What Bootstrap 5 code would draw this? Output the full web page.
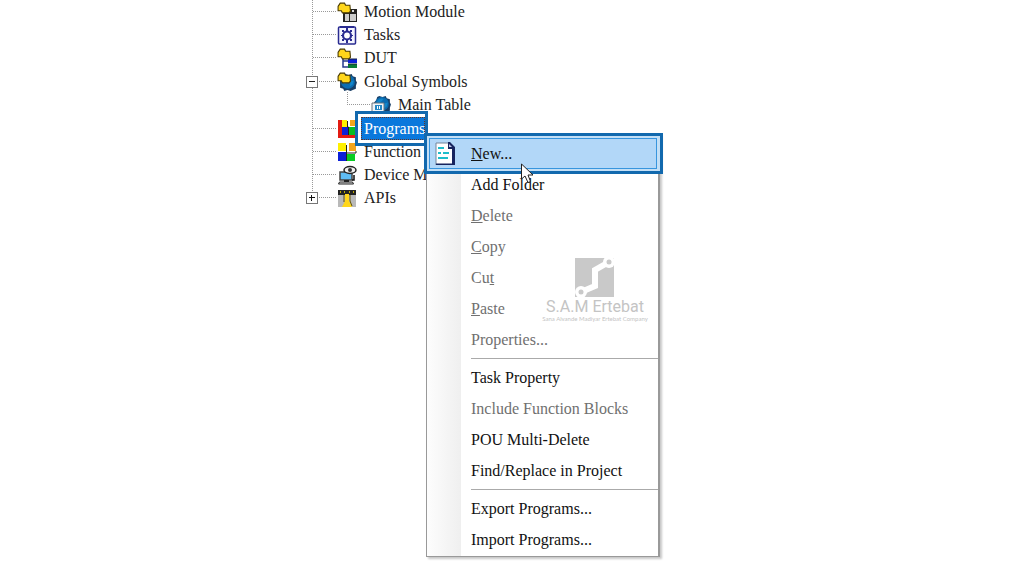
<!DOCTYPE html>
<html lang="en">
<head>
<meta charset="utf-8">
<meta name="viewport" content="width=device-width, initial-scale=1">
<title>Project tree</title>
<link href="https://cdn.jsdelivr.net/npm/bootstrap@5.3.0/dist/css/bootstrap.min.css" rel="stylesheet">
<style>
  body { background: #fff; color: #222; font-family: "Liberation Serif", serif; font-size: 16px; line-height: 23px; }
  .workspace { max-width: 412px; }

  /* project tree */
  .tree-root { --dots: #999; position: relative; }
  .tree-trunk { position: absolute; left: 6px; top: 0; bottom: 12px; width: 1px;
    background: repeating-linear-gradient(180deg, var(--dots) 0 1px, #fff 1px 2px); }
  .tree-node { height: 23px; padding-left: 7px; white-space: nowrap; position: relative; }
  .tree-node::before { content: ""; flex: none; width: 24px; height: 1px;
    background: repeating-linear-gradient(90deg, var(--dots) 0 1px, #fff 1px 2px); }
  .tree-node > svg { flex: none; width: 20px; height: 20px; margin-right: 7px; }
  .tree-group { margin: 1px 0; }
  .tree-sub .tree-node { padding-left: 41px; }
  .tree-sub .tree-node::after { content: ""; position: absolute; left: 41px; top: -1px; height: 13px; width: 1px;
    background: repeating-linear-gradient(180deg, var(--dots) 0 1px, #fff 1px 2px); }
  .expander { position: absolute; left: 0; top: 6px; width: 12px; height: 12px; padding: 0; border: 1px solid #777; background: #fff; }
  .expander svg { display: block; width: 10px; height: 10px; }
  .callout { border: 3px solid #1269ae; background: #fff; position: absolute; pointer-events: none; }
  .callout-node { left: 49px; top: -6px; width: 73px; height: 35px; padding: 3px 0 3px 3px; z-index: 1; }
  .node-selected { display: block; height: 23px; line-height: 23px; background: #0a78dc; color: #fff; padding-left: 3px;
    outline: 1px dotted #632; outline-offset: -1px; }

  /* context menu */
  .context-menu { --bs-dropdown-font-size: 16px; position: absolute; left: 120px; top: 134px; width: 234px;
    padding: 3px 0 1px; border: 1px solid #999; border-right-width: 2px; border-radius: 0; box-shadow: 2px 2px 2px #c8c8c8;
    background: linear-gradient(90deg, #fdfdfd, #efefef) 0 0 / 34px 100% no-repeat #fff; }
  .context-menu .dropdown-item { height: 31px; padding: 0 0 0 44px; line-height: 31px; color: #111; }
  .context-menu .dropdown-item:disabled { color: #707070; }
  .context-menu .dropdown-divider { height: 1px; margin: 3px 0 3px 44px; border-top: 1px solid #aaa; opacity: 1; }
  .context-menu .item-hot { position: relative; background: none; }
  .item-label { position: relative; z-index: 2; }
  .item-icon { position: absolute; left: 7px; top: 3px; width: 22px; height: 25px; z-index: 2; }
  .callout-item { left: -3px; top: -5px; width: 239px; height: 41px; padding: 2px; background: #c3dff6; z-index: 1; }
  .callout-fill { display: block; height: 31px; margin-right: 1px; border: 1px solid #3795de; background: #b2d7f8; }
  .pointer { position: absolute; left: 93px; top: 25px; width: 15px; height: 21px; z-index: 3; }

  .watermark { position: absolute; left: 117px; top: 122px; width: 102px; color: #c4c4c4; font-family: Roboto, sans-serif; pointer-events: none; }
  .watermark svg { width: 40px; height: 40px; }
  .brand-name { font-size: 16px; line-height: 19px; }
  .brand-line { font-family: Lato, sans-serif; font-size: 6px; line-height: 6px; }
</style>
<script src="https://cdn.jsdelivr.net/npm/bootstrap@5.3.0/dist/js/bootstrap.bundle.min.js"></script>
</head>
<body>
<svg class="d-none" aria-hidden="true">
  <symbol id="folder" viewBox="0 0 13 11"><path d="M1 4 3 1h4l1 2h4l.5 5.500L11 10H5L4 8H1z" fill="#ffd61a" stroke="#4a3a00"/></symbol>
  <symbol id="globe" viewBox="0 0 18 18"><path d="m6 1 3 1 3-1 1 2 3 1v3l1 2-1 3v3l-3 1-2 1-3-1-3 1-1-2-3-1V9L1 7l2-2 1-3z" fill="#173e66"/><circle cx="8.500" cy="8.500" r="6.500" fill="#0b6cb0"/><path d="M4 6q3-4 6-2l-3 3-1 4q-2-1-2-5m7 2 3-1-1 4-3 2z" fill="#1286cb"/></symbol>
</svg>

<main class="workspace container-fluid p-0 position-relative min-vh-100">
  <div class="tree-root">
    <span class="tree-trunk"></span>
    <ul class="list-unstyled m-0">
      <li class="tree-node d-flex align-items-center">
        <svg viewBox="0 0 20 20"><path d="M8 7h13v13H6V10z" fill="#222"/><path d="M8 12h4v7H8zm5 0h6v7h-6z" fill="#ccc"/><path d="M10 8h4v2h-4z" fill="#8b7b00"/><path d="M15 8h2v2h-2z" fill="#ddd"/><use href="#folder" width="14" height="12"/></svg>
        <span>Motion Module</span>
      </li>
      <li class="tree-node d-flex align-items-center">
        <svg viewBox="0 0 20 20"><rect x="1.500" y="2" width="17" height="17" rx="1" fill="#f4f5ff" stroke="#292b91" stroke-width="1.500"/><path d="M3 1h14v2H3zM9 3h2v3H9zm0 12h2v3H9zM4 10h2v1H4zm10 0h2v1h-2zM5 5l2 0 0 2-2 0zm8 0h2v2h-2zM5 14h2v2H5zm8 0h2v2h-2z" fill="#292b91"/><circle cx="10" cy="10.500" r="4" fill="#fff" stroke="#292b91" stroke-width="2.200"/></svg>
        <span>Tasks</span>
      </li>
      <li class="tree-node d-flex align-items-center">
        <svg viewBox="0 0 20 20"><path d="M6 9v10h6M6 13h6" fill="none" stroke="#263b8d" stroke-width="1.500"/><path d="M11 11h9v4h-9z" fill="#0b20d8"/><path d="M11 16h9v4h-9z" fill="#087d36"/><path d="M11 11h9M11 16h9" stroke="#15203c"/><use href="#folder" width="14" height="12"/></svg>
        <span>DUT</span>
      </li>
      <li class="tree-group">
        <div class="tree-node d-flex align-items-center">
          <button class="expander" type="button" aria-label="Collapse Global Symbols"><svg viewBox="0 0 10 10"><path d="M2 4.500h6" stroke="#222"/></svg></button>
          <svg viewBox="0 0 20 20"><use href="#globe" x="2" y="1" width="19" height="19"/><use href="#folder" width="14" height="12"/></svg>
          <span>Global Symbols</span>
        </div>
        <ul class="tree-sub list-unstyled m-0">
          <li class="tree-node d-flex align-items-center">
            <svg viewBox="0 0 20 20"><use href="#globe" x="2" width="19" height="19"/><path d="M1 8h12v9H1z" fill="#eef4f8" stroke="#68737c"/><path d="M4 10h7v5H4z" fill="#2588c6"/><path d="M6 11h1v3H6zm2 0h1v3H8z" fill="#fff"/><path d="M5 17h4v2H5z" fill="#333"/></svg>
            <span>Main Table</span>
          </li>
        </ul>
      </li>
      <li class="tree-node d-flex align-items-center">
        <svg viewBox="0 0 20 20"><path d="M1 1h6v10h13v8H1z" fill="#e31b12"/><path d="M5 1h5v7H5z" fill="#fff000"/><path d="M5 8h6v8H5z" fill="#0b20d8"/><path d="M12 8h6v8h-6z" fill="#08bd22"/><path d="M13 1h6v6h-6z" fill="#f4a51b"/><path d="M10.500 2v6h1v8" fill="none" stroke="#251c18"/></svg>
        <span class="callout callout-node"><span class="node-selected">Programs</span></span>
      </li>
      <li class="tree-node d-flex align-items-center">
        <svg viewBox="0 0 20 20"><path d="M1 1h8v8H1z" fill="#fff000"/><path d="M1 10h8v9H1z" fill="#0b20d8"/><path d="M10 12h8v7h-8z" fill="#08cc22"/><path d="M12 1h7v8h-7z" fill="#f4a51b"/><path d="M9.500 3v16M10 11h9V9" fill="none" stroke="#222"/></svg>
        <span>Function Blocks</span>
      </li>
      <li class="tree-node d-flex align-items-center">
        <svg viewBox="0 0 20 20"><path d="M3 7h12v8H3z" fill="#5fbdf5" stroke="#444" stroke-width="1.500"/><path d="M7 15h5v2H7z" fill="#222"/><path d="M2.500 17h13l1 2h-15z" fill="#ddd" stroke="#222"/><ellipse cx="13" cy="5" rx="6" ry="3.500" fill="#eee" stroke="#222" stroke-width="1.500"/><circle cx="13" cy="5" r="2" fill="#333"/><path d="M17 10v5h-2" fill="none" stroke="#111" stroke-width="1.500"/></svg>
        <span>Device Monitor</span>
      </li>
      <li class="tree-node d-flex align-items-center">
        <button class="expander" type="button" aria-label="Expand APIs"><svg viewBox="0 0 10 10"><path d="M2 4.500h6M4.500 2v6" stroke="#111"/></svg></button>
        <svg viewBox="0 0 20 20"><path d="M1 2h18v17H1z" fill="#b9b9b9"/><path d="M1 2h18v5H1z" fill="#222"/><path d="M3 3h1v2H3zm4 0h1v2H7zm5 0h1v2h-1zm4 0h1v2h-1z" fill="#bfa900"/><path d="M8 6h4v7l3 6H5l3-6z" fill="#ffd61a"/><path d="M7 7v7M13 7v6l2 5" fill="none" stroke="#665500"/></svg>
        <span>APIs</span>
      </li>
    </ul>
  </div>

  <div class="dropdown-menu show context-menu">
    <button class="dropdown-item item-hot" type="button">
      <span class="callout callout-item"><span class="callout-fill"></span></span>
      <svg class="item-icon" viewBox="0 0 22 25"><path d="M2 2h13l5 5v17H2z" fill="#fff"/><path d="M2 24V2h13" fill="none" stroke="#72859b"/><path d="M14 1h2l5 5v18H2v-1.500h16V8h-4z" fill="#17245e"/><path d="M15 3v3h3z" fill="#c6cbea"/><path d="M4 7h6M4 12h3m2 0h6M4 17h10" stroke="#1ebdcb" stroke-width="2"/></svg>
      <span class="item-label"><u>N</u>ew...</span>
      <svg class="pointer" viewBox="0 0 15 21"><path d="M1.500 1v15l3.500-3 3 6.500 2.500-1L8 12h5z" fill="#fff" stroke="#222"/></svg>
    </button>
    <button class="dropdown-item" type="button">Add Folder</button>
    <button class="dropdown-item" type="button" disabled><u>D</u>elete</button>
    <button class="dropdown-item" type="button" disabled><u>C</u>opy</button>
    <button class="dropdown-item" type="button" disabled>Cu<u>t</u></button>
    <button class="dropdown-item" type="button" disabled><u>P</u>aste</button>
    <button class="dropdown-item" type="button" disabled>Properties...</button>
    <hr class="dropdown-divider">
    <button class="dropdown-item" type="button">Task Property</button>
    <button class="dropdown-item" type="button" disabled>Include Function Blocks</button>
    <button class="dropdown-item" type="button">POU Multi-Delete</button>
    <button class="dropdown-item" type="button">Find/Replace in Project</button>
    <hr class="dropdown-divider">
    <button class="dropdown-item" type="button">Export Programs...</button>
    <button class="dropdown-item" type="button">Import Programs...</button>
    <div class="watermark d-flex flex-column align-items-center text-nowrap">
      <svg viewBox="0 0 40 40"><path d="M0 1h39v39H0z" fill="#c9c9c9"/><path d="M6 35l14-6V13l14-8" fill="none" stroke="#fff" stroke-width="6"/><circle cx="34" cy="5" r="6" fill="#fff"/><circle cx="6" cy="35" r="6" fill="#fff"/><circle cx="34" cy="5" r="2.500" fill="#c9c9c9"/><circle cx="6" cy="35" r="2.500" fill="#c9c9c9"/></svg>
      <span class="brand-name">S.A.M Ertebat</span>
      <span class="brand-line">Sana Alvande Madiyar Ertebat Company</span>
    </div>
  </div>
</main>
</body>
</html>
